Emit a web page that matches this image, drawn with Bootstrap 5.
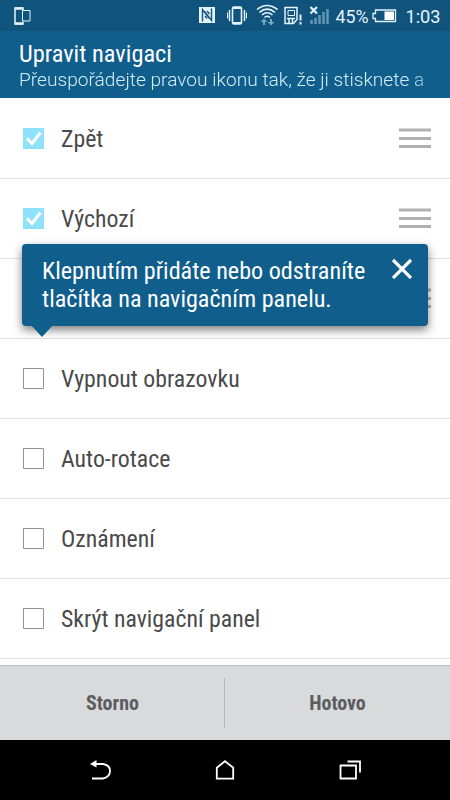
<!DOCTYPE html>
<html lang="cs">
<head>
<meta charset="utf-8">
<meta name="viewport" content="width=device-width, initial-scale=1">
<title>Upravit navigaci</title>
<link href="https://cdn.jsdelivr.net/npm/bootstrap@5.3.0/dist/css/bootstrap.min.css" rel="stylesheet">
<style>
body{font-family:Roboto,"Liberation Sans",sans-serif;color:#4a4a4a;background:#fdfdfd}
.screen{width:450px;height:800px}
.cond{font-family:"Roboto Condensed",Roboto,sans-serif;font-stretch:75%}
.status{height:31px;background:#10547d}
.heading{height:67px;background:#0f5e8c;padding:9px 20px 0 19px}
.heading h1{font-size:24.4px;line-height:28px;font-weight:400;color:#fff}
.heading p{font-size:19.15px;line-height:24px;font-weight:330;color:#d4ecf8;-webkit-mask-image:linear-gradient(to right,#000 94%,rgba(0,0,0,.5));mask-image:linear-gradient(to right,#000 94%,rgba(0,0,0,.5))}
.options{height:567px}
.option{height:80px;flex:none;padding:0 19px 0 23px;border-bottom:1px solid #dfdfdf;font-size:23.8px}
.option:first-child{height:81px}
.option .cond{padding-top:3px}
.option .tick{width:21px;height:21px;margin-right:17px;flex:none}
.tip{left:22px;top:146px;width:406px;height:82px;background:#0f5e8c;color:#fff;border-radius:4px;box-shadow:0 4px 10px rgba(0,0,0,.5);padding:13px 16px 0 20px;font-size:24.15px;line-height:28px}
.tip .arrow{left:9px;top:81px}
.actions{height:75px;background:#d9dadc;border-top:1px solid #bcbdbf;font-size:20px;font-weight:700;color:#5c5d60}
.actions .rule{width:1px;height:50px;margin-left:-1px;background:#b3b4b6}
.keys{height:60px}
svg{display:block;flex:none}
</style>
<script src="https://cdn.jsdelivr.net/npm/bootstrap@5.3.0/dist/js/bootstrap.bundle.min.js"></script>
</head>
<body>
<div class="screen d-flex flex-column overflow-hidden">
<header class="status d-flex">
<svg width="335" height="31" viewBox="0 0 335 31" fill="none" stroke="#e4f2fa">
<path d="M23 10.500V8H15v16h8v-2.500" stroke-width="1.500"/><path d="M15 8.500h8M15 23.500h8" stroke-width="2.500"/><path d="M22.500 10.500h7.500v10.500h-7.500z"/>
<path d="M199 7h16v16h-16z" fill="#e4f2fa" stroke="none"/><path d="M202.500 21.500V9.500l7 9M211.500 8.500v12l-7-9M207 11l2.500 3M207 18.500l-2-2.500" stroke="#10547d" stroke-width="1.400"/>
<rect x="232.500" y="7" width="9" height="17" rx="1.500" stroke-width="1.600"/><path d="M233 8h8M233 23h8" stroke-width="2"/><path d="M229.500 10v11M244.500 10v11" stroke-width="1.500"/><path d="M227.500 12.500v6M246.500 12.500v6"/>
<g stroke-width="1.600"><path d="M257 9.500Q267 1.500 277.500 9.500M259.500 12.300Q267 6 275 12.300M262 15Q267 10.500 272.500 15M264.500 17.500Q267 15 270 17.500"/></g><path d="M264 18.500l-3.300 3.500h2.300v3h2v-3h2.300zM271 25.500l-3.300-3.500h2.300v-3h2v3h2.300z" fill="#78a7c2" stroke="none"/>
<path d="M285 7.500h12v12l-3.500 4H285z" stroke-width="1.500"/><path d="M288 10.500h6.500v5H288z"/><path d="M287 18.500h8M289 18v5M292.500 18v5" stroke-width="1.500"/><path d="M300.500 14.500v6M300.500 22v2.500" stroke-width="2"/>
<path d="M310.500 7l6.500 6.500M317 7l-6.500 6.500" stroke-width="2.200"/>
<path d="M311.500 20v4M315.500 18v6M319.500 15v9M323.500 12v12M327.500 9v15" stroke="#6396b3" stroke-width="2.500"/>
</svg>
<svg width="115" height="31" viewBox="335 0 115 31">
<g fill="#e4f2fa" font-family="Roboto, sans-serif" font-size="19"><text x="335.500" y="23" textLength="33" lengthAdjust="spacingAndGlyphs">45%</text><text x="405.500" y="23" textLength="35" lengthAdjust="spacingAndGlyphs">1:03</text></g>
<path d="M375.500 10H395.500v11.500h-20v-3h-2.500v-5h2.500z" fill="none" stroke="#e4f2fa" stroke-width="1.300"/><path d="M384.500 11.500h9.500v8.500h-9.500z" fill="#fff"/>
</svg>
</header>
<section class="heading"><h1 class="cond mb-0">Upravit navigaci</h1><p class="mb-0 text-nowrap">Přeuspořádejte pravou ikonu tak, že ji stisknete a</p></section>
<main class="options position-relative d-flex flex-column bg-white">
<div class="option d-flex align-items-center"><svg class="tick" viewBox="0 0 21 21"><path d="M0 0h21v21H0z" fill="#8ee2fc"/><path d="M4 10.500l5 5 8.500-11" fill="none" stroke="#fff" stroke-width="3"/></svg><span class="cond">Zpět</span><svg class="ms-auto" width="32" height="21"><path d="M0 2h32M0 10.500h32M0 18.500h32" stroke="#b1b1b1" stroke-width="3"/></svg></div>
<div class="option d-flex align-items-center"><svg class="tick" viewBox="0 0 21 21"><path d="M0 0h21v21H0z" fill="#8ee2fc"/><path d="M4 10.500l5 5 8.500-11" fill="none" stroke="#fff" stroke-width="3"/></svg><span class="cond">Výchozí</span><svg class="ms-auto" width="32" height="21"><path d="M0 2h32M0 10.500h32M0 18.500h32" stroke="#b1b1b1" stroke-width="3"/></svg></div>
<div class="option d-flex align-items-center"><svg class="ms-auto" width="32" height="21"><path d="M0 2h32M0 10.500h32M0 18.500h32" stroke="#b1b1b1" stroke-width="3"/></svg></div>
<div class="option d-flex align-items-center"><svg class="tick" viewBox="0 0 21 21"><path d="M.5.5h20v20H.5z" fill="none" stroke="#929292"/></svg><span class="cond">Vypnout obrazovku</span></div>
<div class="option d-flex align-items-center"><svg class="tick" viewBox="0 0 21 21"><path d="M.5.5h20v20H.5z" fill="none" stroke="#929292"/></svg><span class="cond">Auto-rotace</span></div>
<div class="option d-flex align-items-center"><svg class="tick" viewBox="0 0 21 21"><path d="M.5.5h20v20H.5z" fill="none" stroke="#929292"/></svg><span class="cond">Oznámení</span></div>
<div class="option d-flex align-items-center"><svg class="tick" viewBox="0 0 21 21"><path d="M.5.5h20v20H.5z" fill="none" stroke="#929292"/></svg><span class="cond">Skrýt navigační panel</span></div>
<aside class="tip cond position-absolute d-flex justify-content-between"><div class="text-nowrap">Klepnutím přidáte nebo odstraníte<br>tlačítka na navigačním panelu.</div><svg width="20" height="22"><path d="M1 3l18 18M19 3L1 21" stroke="#fff" stroke-width="3.200"/></svg><svg class="arrow position-absolute" width="22" height="13"><path d="M0 0h22L11 12z" fill="#0f5e8c"/></svg></aside>
</main>
<footer class="actions cond d-flex align-items-center text-center"><span class="col">Storno</span><span class="rule"></span><span class="col">Hotovo</span></footer>
<nav class="keys bg-black">
<svg width="450" height="60" viewBox="0 740 450 60" fill="none" stroke="#fff" stroke-width="1.800"><path d="M95 764h8q7 1 7 7t-7 7.500H92"/><path d="M90 764l6.500-4v7.500z" fill="#fff" stroke="none"/><path d="M216.800 778.700v-11l8.200-6.500 8.200 6.500v11z"/><path d="M340.500 765.500H356v13h-15.500zM347.500 761.500H360v11"/></svg>
</nav>
</div>
</body>
</html>
